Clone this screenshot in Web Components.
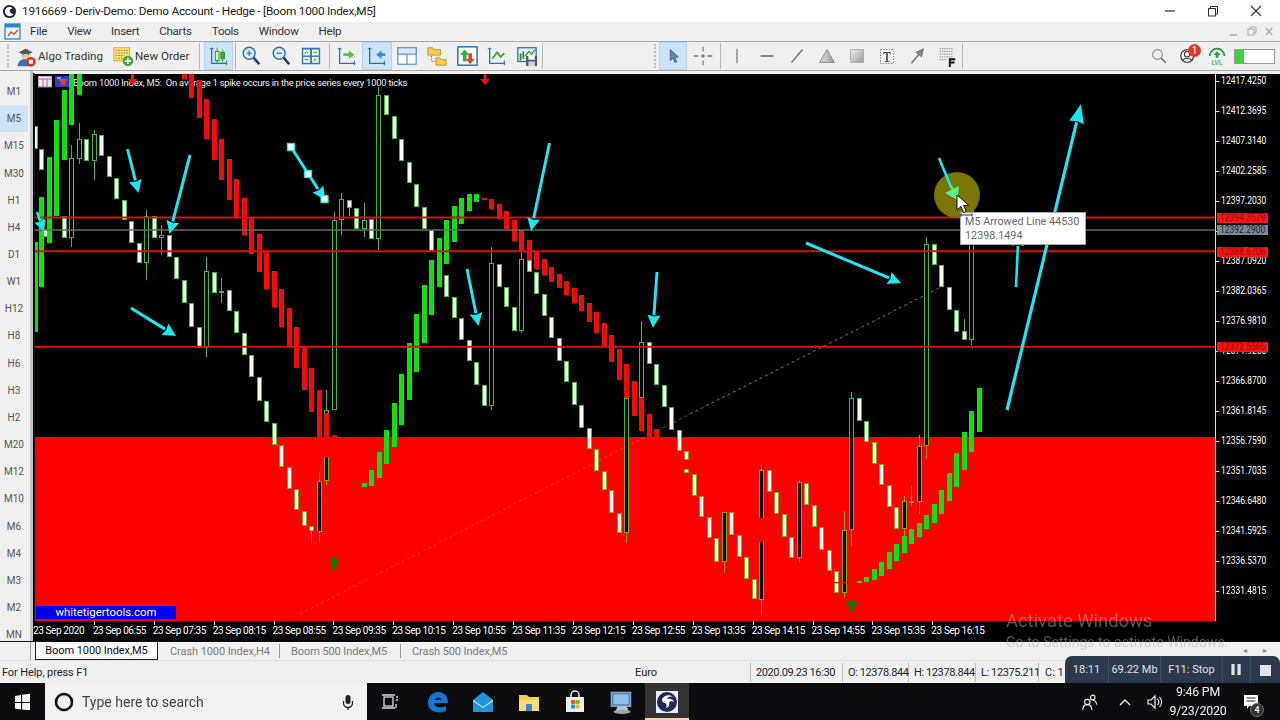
<!DOCTYPE html>
<html><head><meta charset="utf-8"><title>MT5</title>
<style>
html,body{margin:0;padding:0;width:1280px;height:720px;overflow:hidden;background:#f0f0f0;}
body{font-family:Roboto,"Liberation Sans",sans-serif;font-size:12px;color:#222;}
</style></head><body>
<mt-app>
  <win-title>1916669 - Deriv-Demo: Demo Account - Hedge - [Boom 1000 Index,M5]</win-title>
  <mt-menu></mt-menu>
  <mt-toolbar></mt-toolbar>
  <mt-main></mt-main>
  <mt-tabs></mt-tabs>
  <mt-status></mt-status>
  <mt-taskbar></mt-taskbar>
  <rec-widget></rec-widget>
  <win-watermark></win-watermark>
</mt-app>
<script>
const BL='#2a6fb0';
const axes=(c=BL)=>`<path d="M4 3v17h17" fill="none" stroke="${c}" stroke-width="1.4"/><path d="M2 4h4M20 17v5" stroke="${c}" stroke-width="1.1"/>`;
const svg=(b,s=24,vb=24)=>`<svg width="${s}" height="${s}" viewBox="0 0 ${vb} ${vb}" style="display:block">${b}</svg>`;
const ICONS={
 algo:`<path d="M3 7l8-4 8 4-8 4z" fill="#555"/><path d="M7 9v4h8V9" fill="#8a8a8a"/><circle cx="11" cy="13" r="4" fill="#f2c9a0"/><path d="M2 23c0-6 4-8 9-8s8 2 8 8z" fill="#2f74c0"/><circle cx="17" cy="18" r="5.5" fill="#e03020"/><rect x="14.7" y="15.7" width="4.6" height="4.6" fill="#fff"/>`,
 order:`<rect x="1" y="2" width="18" height="15" fill="#fbe27a" stroke="#c9a52a"/><path d="M3 5h14M3 8h14M3 11h10M3 14h8" stroke="#9a7f20" stroke-width="1" stroke-dasharray="2 1"/><circle cx="17" cy="17" r="6" fill="#3aa83a"/><path d="M17 13.5v7M13.5 17h7" stroke="#fff" stroke-width="2"/>`,
 candle:axes()+`<path d="M10 3v17M16 5v13" stroke="#2f8f2f"/><rect x="8" y="7" width="4" height="10" fill="#d8f0c8" stroke="#2f8f2f"/><rect x="14" y="8" width="4" height="7" fill="#3aa83a" stroke="#2f8f2f"/>`,
 zin:`<circle cx="10" cy="9" r="6.5" fill="#dcedfa" stroke="${BL}" stroke-width="1.5"/><path d="M7 9h6M10 6v6" stroke="${BL}" stroke-width="1.3"/><path d="M15 14l6 7" stroke="#1d3f75" stroke-width="2.8"/>`,
 zout:`<circle cx="10" cy="9" r="6.5" fill="#dcedfa" stroke="${BL}" stroke-width="1.5"/><path d="M7 9h6" stroke="${BL}" stroke-width="1.3"/><path d="M15 14l6 7" stroke="#1d3f75" stroke-width="2.8"/>`,
 tile:`<rect x="2" y="3" width="20" height="18" fill="#2f78ad"/><rect x="3.5" y="5" width="7.5" height="6.5" fill="#e6f3ea"/><rect x="13" y="5" width="7.5" height="6.5" fill="#e6f3ea"/><rect x="3.5" y="13" width="7.5" height="6.5" fill="#e6f3ea"/><rect x="13" y="13" width="7.5" height="6.5" fill="#e6f3ea"/><path d="M5 10l2-3 2 2M14.5 8h4M5 16h4M14.5 18l2-3 2 2" stroke="#2d9a3a" fill="none"/>`,
 shift:axes()+`<path d="M8 9h6V6l6 4.5-6 4.5v-3H8z" fill="#55c04a"/>`,
 scroll:axes()+`<path d="M21 9h-4V6l-6 4.5 6 4.5v-3h4z" fill="#2a8fe0"/>`,
 tpl:`<rect x="2" y="3" width="20" height="18" fill="#fff" stroke="#5a94c8" stroke-width="1.3"/><rect x="2" y="3" width="20" height="7" fill="#dbe8f3" stroke="#5a94c8" stroke-width="1.3"/><path d="M12 10v11" stroke="#5a94c8" stroke-width="1.3"/>`,
 folder:`<path d="M2 3h5l2 2h7v6H2z" fill="#f3cd52" stroke="#b8912a"/><path d="M11 14h4l2 2h5v6H11z" fill="#f3cd52" stroke="#b8912a"/><path d="M6 12v6h4" stroke="#666" fill="none" stroke-dasharray="1.5 1.5"/>`,
 updown:`<rect x="2" y="2" width="21" height="20" fill="#fff" stroke="${BL}" stroke-width="1.6"/><path d="M9.5 5l5 6h-3v7h-4v-7h-3z" fill="#3cae3c"/><path d="M15.5 21l5-6h-3v-6h-4v6h-3z" fill="#e0442c"/>`,
 lineC:axes()+`<path d="M7 15l5-7 4 5 4-4" fill="none" stroke="#3aa83a" stroke-width="2"/>`,
 save:`<rect x="2" y="3" width="20" height="15" fill="#eef5fb" stroke="${BL}" stroke-width="1.4"/><path d="M5 9v8M8 7v8" stroke="#2d8a3a" stroke-width="2"/><path d="M10 12l4-5 3 3 4-5" fill="none" stroke="#2d9a3a" stroke-width="1.5"/><rect x="11" y="12" width="12" height="11" fill="#4d5d6a"/><rect x="13.5" y="12" width="7" height="4" fill="#fff"/><rect x="13.5" y="18" width="7" height="5" fill="#cfd6db"/>`,
 cursor:`<path d="M9 5l0 12 3-2.600 2.200 4.800 2-.9-2.200-4.700 3.800-.4z" fill="#6584ad" stroke="#3a4c66" stroke-width=".8"/>`,
 cross:`<path d="M12 2v5M12 10v4M12 17v5M2 12h5M10 12h4M17 12h5" stroke="#777" stroke-width="1.4"/>`,
 vline:`<path d="M12 4v16" stroke="#8a8a8a" stroke-width="1.6"/>`,
 hline:`<path d="M5 12h14" stroke="#666" stroke-width="1.6"/>`,
 trend:`<path d="M6 19L18 5" stroke="#777" stroke-width="1.6"/>`,
 tri:`<defs><linearGradient id="t1" x1="0" x2="1"><stop offset="0" stop-color="#e4e4e4"/><stop offset="1" stop-color="#999"/></linearGradient></defs><path d="M12 5l8 14H4z" fill="url(#t1)" stroke="#888"/>`,
 rect:`<defs><linearGradient id="t2" x1="0" x2="1" y1="0" y2="1"><stop offset="0" stop-color="#f0f0f0"/><stop offset="1" stop-color="#999"/></linearGradient></defs><rect x="5" y="5" width="14" height="14" fill="url(#t2)" stroke="#aaa"/>`,
 textT:`<rect x="5" y="5" width="14" height="15" fill="#fff" stroke="#666" stroke-dasharray="1.5 1.5"/><path d="M8 7.500h8v2.500h-1l-.4-1.300H13V17.500h1.300v1h-4.600v-1H11V8.700H9.400L9 10H8z" fill="#555"/>`,
 arrowT:`<path d="M6 20L15 9" stroke="#777" stroke-width="1.800"/><path d="M19 4l-2 9-6-5z" fill="#888" stroke="#555" stroke-width=".7"/>`,
 fib:`<path d="M4 4h15M4 7h15M4 10h15M4 13h15M4 16h8" stroke="#999" stroke-width="1.200" stroke-dasharray="1.500 1"/><path d="M14 14.500h7v2h-4.800v1.600h4v2h-4V24H14z" fill="#111"/>`,
 search:`<circle cx="10" cy="10" r="6.5" fill="none" stroke="#888" stroke-width="1.4"/><path d="M15 15l6 6" stroke="#666" stroke-width="1.900"/>`
};
const def=(n,html)=>customElements.define(n,class extends HTMLElement{constructor(){super();this.attachShadow({mode:'open'}).innerHTML=typeof html==='function'?html():html;}});

def('mt-app',`<style>:host{display:flex;flex-direction:column;width:1280px;height:720px;position:relative;overflow:hidden;filter:blur(.3px)}</style><slot></slot>`);

def('win-title',`<style>:host{display:flex;align-items:center;height:22px;background:#fff;color:#222;font:11.8px Roboto,sans-serif;letter-spacing:-.25px;flex:none}
.ic{margin:0 5px 0 2px}span{flex:1;white-space:nowrap}.c{display:flex;align-items:center;justify-content:center;width:43px;height:22px}</style>
<div class="ic">${svg(`<circle cx="8" cy="8" r="7" fill="#1c2a44"/><path d="M8 3a5 5 0 1 0 4.5 7.500A4 4 0 0 1 8 6.500L11 4.500A5 5 0 0 0 8 3z" fill="#fff"/>`,15,16)}</div>
<span><slot></slot></span>
<div class="c">${svg(`<path d="M1 6h10" stroke="#333" stroke-width="1.200"/>`,12,12)}</div>
<div class="c">${svg(`<rect x="1.5" y="3.5" width="7" height="7.5" fill="none" stroke="#333"/><path d="M3.5 3.500V1.500h7v7.500H8.500" fill="none" stroke="#333"/>`,12,12)}</div>
<div class="c" style="margin-right:3px">${svg(`<path d="M1 1l10 10M11 1L1 11" stroke="#333" stroke-width="1.100"/>`,12,12)}</div>`);

def('mt-menu',`<style>:host{display:flex;align-items:center;height:18px;padding-bottom:1px;background:#f0f0f0;font:11.6px Roboto,sans-serif;letter-spacing:-.27px;color:#333;flex:none;padding-left:4px}
.m{display:flex;gap:20px;margin-left:9px;flex:1}.r{display:flex;gap:7px;margin-right:5px;color:#aaa}
</style>${svg(`<rect x="1" y="1" width="15" height="15" fill="#e8f2fb" stroke="#2a86d0" stroke-width="1.300"/><rect x="1" y="1" width="15" height="3.500" fill="#2a86d0"/><path d="M4 13l3-4 3 2 4-4" stroke="#d9532c" fill="none" stroke-width="1.400"/>`,17,17)}
<div class="m"><span>File</span><span>View</span><span>Insert</span><span>Charts</span><span>Tools</span><span>Window</span><span>Help</span></div>
<div class="r">${svg(`<path d="M2 9h7" stroke="#aaa" stroke-width="1.500"/>`,11,11)}${svg(`<rect x="2" y="3" width="6" height="6" fill="none" stroke="#aaa"/><path d="M4 3V1h6v6H8" fill="none" stroke="#aaa"/>`,11,11)}${svg(`<path d="M2 2l6 7M8 2L2 9" stroke="#aaa" stroke-width="1.300"/>`,11,11)}</div>`);

def('mt-toolbar',()=>{
 const b=(n,w=30,on=false)=>`<div class="b${on?' on':''}" style="width:${w}px">${svg(ICONS[n],22)}</div>`;
 const sep=()=>`<i class="s"></i>`;
 const sp=w=>`<span style="width:${w}px;flex:none"></span>`;
 return `<style>:host{display:flex;align-items:stretch;height:28px;flex:none;background:#f0f0f0;border-top:1px solid #a8a8a8;border-bottom:1px solid #a8a8a8;font:11.6px Roboto,sans-serif;color:#333;padding-left:7px}
.g{width:2px;margin:2px 3px 2px 0;border-left:2px dotted #bbb;box-sizing:border-box;flex:none}.s{width:1px;background:#b5b5b5;margin:1px 0;flex:none;display:block}
.b{display:flex;align-items:center;justify-content:center;flex:none;height:28px;box-sizing:border-box}.b.on{background:#cce4f7;border:1px solid #b0d4f0;}
.t{display:flex;align-items:center;gap:1px;flex:none;white-space:nowrap;box-sizing:border-box}.r{margin-left:auto;display:flex;align-items:center}
.badge{position:absolute;left:10px;top:-1px;width:13px;height:13px;border-radius:50%;background:#e03a25;color:#fff;font:10px/13px Roboto,sans-serif;text-align:center}
</style><i class="g"></i>
<div class="t" style="width:101px;padding-left:4px">${svg(ICONS.algo,21)}<span>Algo Trading</span></div>
<div class="t" style="width:86px">${svg(ICONS.order,21)}<span>New Order</span></div>
${sep()}${sp(4)}${b('candle',29,true)}${sp(2)}${sep()}
${b('zin')}${b('zout')}${b('tile')}${sp(3)}${sep()}${sp(2)}
${b('shift')}${b('scroll',30,true)}${b('tpl')}${b('folder')}${b('updown')}${b('lineC')}${b('save')}${sep()}
${sp(111)}<i class="g"></i>
${b('cursor',28,true)}${b('cross',31)}${sp(2)}${sep()}${sp(1)}
${b('vline')}${b('hline')}${b('trend')}${b('tri')}${b('rect')}${b('textT')}${b('arrowT')}${b('fib')}${sep()}
<div class="r"><div class="b" style="width:24px;margin-right:2px">${svg(ICONS.search,18)}</div>
<div style="position:relative;width:24px;margin-left:5px;height:22px">${svg(`<circle cx="10" cy="12" r="7" fill="#fff" stroke="#444" stroke-width="1.500"/><circle cx="10" cy="10" r="3" fill="none" stroke="#444" stroke-width="1.300"/><path d="M5 17c1-3 9-3 10 0" fill="none" stroke="#444" stroke-width="1.300"/>`,22)}<span class="badge">1</span></div>
<div style="width:22px;margin-left:5px">${svg(`<path d="M3 12a8 8 0 0 1 16 0" fill="none" stroke="#2a9c3a" stroke-width="2"/><path d="M11 7l4 4h-2.500v3h-3v-3H7z" fill="#2a9c3a"/><text x="11" y="22" text-anchor="middle" font-family="Roboto" font-size="7.500" fill="#2a9c3a">LVL</text>`,22)}</div>
<div style="width:39px;height:13px;margin:0 5px;border:1px solid #999;background:linear-gradient(90deg,#3fcf3f 0,#3fcf3f 22%,#fff 22%)"></div></div>`;
});

def('tf-panel',()=>`<style>:host{display:flex;flex-direction:column;width:30px;flex:none;background:#f0f0f0;padding-top:7px;box-sizing:border-box;font:10px Roboto,sans-serif;color:#555}
div{height:27.170px;display:flex;align-items:center;justify-content:center;flex:none;margin-right:2px}.on{background:#cce4f7}</style>
${'M1 M5 M15 M30 H1 H4 D1 W1 H12 H8 H6 H3 H2 M20 M12 M10 M6 M4 M3 M2 MN'.split(' ').map(t=>`<div class="${t==='M5'?'on':''}">${t}</div>`).join('')}`);

const W=[[35,126,149],[41.5,149,170],[45.5,229,237],[56.5,200,215],[64,216,238],[86.5,139,161],[101.5,135,156],[109,156,177],[116.5,178,199],[124,200,220],[131.5,221,243],[139,243,263],[154,216,238],[169,235,257],[176.5,257,279],[184,280,303],[191.5,303,327],[199,327,348],[214,272,293],[229,290,311],[236.5,311,333],[244,333,355],[251.5,355,377],[259,377,401],[266.5,401,422],[274,423,445],[281.5,445,467],[289,467,489],[296.5,489,510],[304,511,526],[311.5,526,531,526,543],[349,200,208,200,216],[356.5,208,229],[371.5,219,239],[386.5,95,115],[394,116,139],[401.5,139,161],[409,162,183],[416.5,184,207],[424,207,229],[431.5,230,251],[439,252,272],[446.5,275,297],[454,297,318],[461.5,318,340],[469,340,361],[476.5,362,385],[484,385,406],[499,264,287],[506.5,287,307],[514,307,331],[529,260,272],[536.5,272,294],[544,294,316],[551.5,317,338],[559,338,361],[566.5,361,382],[574,382,405],[581.5,405,428],[589,428,449],[596.5,449,471],[604,471,490],[611.5,490,513],[619,513,533],[649,342,364],[656.5,364,385],[664,385,407],[671.5,407,430],[679,430,451],[686,451,460],[686,469,473],[694,474,496],[701,496,517],[709,517,538],[716,538,562],[731,512,535],[739,535,557],[746.5,557,579],[754,579,599],[769,470,492],[776.5,492,514],[784,514,537],[791.5,537,558],[806.5,483,505],[814,505,527],[821.5,527,550],[829,550,571],[836,571,593],[859,398,421],[866.5,421,442],[874,442,464],[881,464,485],[889,485,507],[896.5,507,529],[934,244,265],[941.5,265,287],[949,287,310],[956,310,332],[964,331,340,319,340]];
const H=[[71.5,158,238,145,247],[79,139,159,123,164],[94,134,161,130,180],[146.5,216,263,210,280],[161.5,235,238,225,255],[206.5,271,348,257,357],[221.5,291,293,278,303],[319,481,532,472,543],[326.5,410,481,390,485],[334,220,410,212,410],[341.5,199,220,193,235],[364,220,229,203,237],[378.5,95,239,87,250],[491.5,263,406,247,410],[521.5,259,331,252,333],[626.5,398,533,398,543],[641.5,342,398,321,398],[724,512,562,512,573],[761.5,470,600,465,615],[799,482,558,480,563],[844,530,593,511,598],[851.5,398,530,392,547],[904,501,529,496,537],[911.5,501,503,486,507],[919,446,502,435,514],[926.5,244,446,237,459],[971.5,208,340,205,345]];
const G=[[35,242,332],[41.5,197,287],[49,157,243],[56.5,120,216],[64,90,160],[71.5,74,125],[79,74,95],[364,483,487],[371.5,470,486],[379,452,478],[386.5,430,464],[394,403,447],[401.5,374,425],[409,343,400],[416.5,314,372],[424,285,343],[431.5,260,315],[439,238,287],[446.5,220,264],[454,206,242],[461.5,198,224],[469,194,211],[476.5,194,202],[859,581,583],[866.5,577,582],[874,569,580],[881,562,576],[889,552,569],[896.5,544,561],[904,536,553],[911.5,529,544],[919,523,537],[926.5,515,529],[934,504,523],[941.5,490,514],[949,473,501],[956.5,453,487],[964,432,470],[971.5,411,452],[979,388,432]];
const R=[[184,74,79],[191.5,74,98],[199,80,118],[206.5,99,139],[214,119,160],[221.5,139,180],[229,159,200],[236.5,179,218],[244,198,235],[251.5,218,254],[259,234,272],[266.5,251,289],[274,271,307],[281.5,289,327],[289,308,347],[296.5,327,368],[304,347,390],[311.5,368,412],[319,390,437],[326.5,413,437],[334,435,437],[484,198,200],[491.5,199,209],[499,204,219],[506.5,211,229],[514,220,241],[521.5,230,251],[529,240,260],[536.5,252,269],[544,259,275],[551.5,267,282],[559,274,288],[566.5,281,295],[574,288,303],[581,295,311],[589,303,322],[596.5,312,333],[604,323,347],[611.5,335,362],[619,349,380],[626.5,364,398],[634,381,416],[641.5,398,431],[649,414,437],[656.5,429,437]];
function arrow(x1,y1,x2,y2,c='#1fe5ee',sw=3,hl=14,hw=7){const d=Math.hypot(x2-x1,y2-y1),ux=(x2-x1)/d,uy=(y2-y1)/d,bx=x2-ux*hl,by=y2-uy*hl,nx=-uy,ny=ux;
 return `<path d="M${x1} ${y1}L${bx} ${by}" stroke="${c}" stroke-width="${sw}"/><path d="M${x2} ${y2}L${bx+nx*hw} ${by+ny*hw}L${bx+ux*1.5} ${by+uy*1.5}L${bx-nx*hw} ${by-ny*hw}z" fill="${c}"/>`;}
function chartSvg(){
 const ST='url(#st)', fl=Math.floor;
 const wick=(x,a,b)=>`<rect x="${fl(x)}" y="${a}" width="1" height="${b-a}" fill="${ST}"/>`;
 const body=(x,t,b,f)=>`<rect x="${fl(x)-1.5}" y="${t+.5}" width="4" height="${Math.max(b-t-1,1)}" fill="${f}" stroke="${ST}" stroke-width="1"/>`;
 const bar=(x,t,b,f)=>`<rect x="${fl(x)-2}" y="${t}" width="5" height="${b-t}" fill="${f}"/>`;
 let s=`<defs><linearGradient id="st" gradientUnits="userSpaceOnUse" x1="0" x2="0" y1="74" y2="621"><stop offset="0" stop-color="#50b04a"/><stop offset=".6673" stop-color="#50b04a"/><stop offset=".6673" stop-color="#8fa012"/><stop offset="1" stop-color="#8fa012"/></linearGradient></defs>`;
 s+=`<rect x="35" y="437" width="1180" height="184" fill="#f00"/>`;
 s+=`<path d="M300 614L690 414" stroke="#f27a30" stroke-width="1" stroke-dasharray="3 3" opacity=".6"/><path d="M690 414L945 285" stroke="#a86464" stroke-width="1" stroke-dasharray="3 3"/>`;
 for(const c of H){if(c[3]<c[1])s+=wick(c[0],c[3],c[1]);if(c[4]>c[2])s+=wick(c[0],c[2],c[4]);s+=body(c[0],c[1],c[2],'#050505');}
 for(const c of W){if(c[3]!==undefined){if(c[3]<c[1])s+=wick(c[0],c[3],c[1]);if(c[4]>c[2])s+=wick(c[0],c[2],c[4]);}s+=body(c[0],c[1],c[2],'#f2ffec');}
 for(const c of G)s+=bar(c[0],c[1],c[2],'#10e010');
 for(const c of R)s+=bar(c[0],c[1],c[2],'#f50a0a');
 s+=`<rect x="323.5" y="437" width="7" height="20" fill="#f00"/><rect x="758" y="518" width="7" height="24" fill="#f00"/><rect x="330" y="437" width="8" height="4" fill="#f00"/>`;
 s+=`<path d="M833 582.500h16" stroke="#d01818" stroke-width="1.200"/>`;
 for(const y of [217.5,251.3,346.8])s+=`<path d="M35 ${y}H1215" stroke="#d81010" stroke-width="1.900"/>`;
 s+=`<path d="M35 230H1215" stroke="#6a6a6a" stroke-width="1.300"/>`;
 s+=`<circle cx="957" cy="195" r="23" fill="#7a7400"/>`;
 const a=(...p)=>arrow(...p), C='#1fe5ee';
 s+=a(127.5,149,138.5,193,C,3,13,6.5)+a(190,155,169.5,234,C,3,13,6.5)+a(37,212,44,232,C,2.6,12,6)+a(549.5,143,531,231,C,3,13,6.5)+a(131,308,176,336,C,3,13,6.5)+a(467,269,478.5,326,C,3,13,6.5)+a(657,272,653,328,C,3,13,6.5)+a(806,243,901,283,C,3,13,6.5);
 s+=`<path d="M939 158L951 187" stroke="${C}" stroke-width="2.600"/><path d="M945 193L959 186L957.500 200z" fill="#58ef90"/><path d="M951 186l4 9" stroke="#58ef90" stroke-width="2.600"/>`;
 s+=a(291,147,325,200,C,3,13,6.5)+a(1016,287,1018.5,232,C,2.6,14,6)+a(1007,410,1081,104,C,3.2,19,7.5);
 for(const[p,q]of[[291,147],[308,174],[324.5,199]])s+=`<rect x="${p-3.5}" y="${q-3.5}" width="7" height="7" fill="#fff" stroke="${C}" stroke-width="1.300"/>`;
 const rd=(x)=>`<path d="M${x-1.5} 74v5h-3.500l5 6 5-6h-3.500v-5z" fill="#f01010"/>`;
 s+=rd(132.5)+rd(485);
 const ug=(x,y)=>`<path d="M${x} ${y}l6 6h-3.500v7h-5v-7H${x-6}z" fill="#0c7a12"/>`;
 s+=ug(334,556)+ug(851.5,599);
 return `<svg width="1180" height="547" viewBox="35 74 1180 547" style="position:absolute;left:0;top:0;display:block">${s}</svg>`;
}
def('mt-chart',()=>{
 const ps='12417.4250 12412.3695 12407.3140 12402.2585 12397.2030 12392.1475 12387.0920 12382.0365 12376.9810 12371.9255 12366.8700 12361.8145 12356.7590 12351.7035 12346.6480 12341.5925 12336.5370 12331.4815'.split(' ');
 const ts='23 Sep 2020|23 Sep 06:55|23 Sep 07:35|23 Sep 08:15|23 Sep 08:55|23 Sep 09:35|23 Sep 10:15|23 Sep 10:55|23 Sep 11:35|23 Sep 12:15|23 Sep 12:55|23 Sep 13:35|23 Sep 14:15|23 Sep 14:55|23 Sep 15:35|23 Sep 16:15'.split('|');
 const tag=(t,y,bg,c)=>`<div class="tag" style="top:${y-74-5}px;background:${bg};color:${c}"><span>${t}</span></div>`;
 return `<style>:host{display:flex;flex-direction:column;flex:1;background:#000;color:#fff;border-left:3px solid #c4c4c4;padding-top:2px;box-sizing:border-box;min-width:0;padding-left:1px;font:9.8px Roboto,sans-serif;position:relative}
 :host::before{content:"";position:absolute;left:0;right:0;top:0;height:2px;background:#f0f0f0}
 .row{display:flex;height:548px;flex:none}
 .plot{flex:none;width:1180px;border-top:1px solid #eee;border-left:1px solid #111;position:relative;background:#000;overflow:hidden}
 .axis{flex:1;border-left:1px solid #ddd;border-top:1px solid #eee;padding-top:7px;position:relative;overflow:hidden;font-size:10px}
 .p{height:30px;line-height:0;padding-left:6px;white-space:nowrap;position:relative;transform:scaleX(.85);transform-origin:0 0;box-sizing:border-box}
 .p::before{content:"";position:absolute;left:0;top:0;width:4px;height:1px;background:#ddd}
 .tag{position:absolute;left:1px;width:51px;height:10px;line-height:10px;padding-left:3px;box-sizing:border-box;font-size:10px;white-space:nowrap}
 .tag span{display:inline-block;transform:scaleX(.85);transform-origin:0 0}
 .time{display:flex;height:19px;flex:none;margin-left:-1px;padding-top:4px;box-sizing:border-box}
 .t{width:59.9px;flex:none;white-space:nowrap;letter-spacing:-.4px;position:relative;line-height:12px;font-size:10px}
 .t:not(:first-child)::before{content:"";position:absolute;left:1px;top:-4px;width:1px;height:4px;background:#ddd}
 .hdr{position:absolute;left:38px;top:3px;white-space:pre;font-size:9.4px;letter-spacing:-.22px;color:#eee;line-height:12px}
 .ic{position:absolute;left:3px;top:2px;display:flex;gap:3px}
 .brand{position:absolute;left:1px;top:532px;width:140px;height:13px;background:#0000f0;color:#fff;font:11.4px/13px Roboto,sans-serif;text-align:center;box-sizing:border-box}
 .tip{position:absolute;left:925px;top:138px;width:126px;height:33px;box-sizing:border-box;background:#fff;border:1px solid #aaa;color:#666;font:10.8px/14px Roboto,sans-serif;padding:2px 4px}
 .cur{position:absolute;left:921px;top:120px}
 </style>
 <div class="row"><div class="plot">
  <div class="hdr">Boom 1000 Index, M5:  On average 1 spike occurs in the price series every 1000 ticks</div>
  ${chartSvg()}
  <div class="ic">${svg(`<rect x="0" y="0" width="14" height="11" fill="#e8e8f8" stroke="#88a"/><path d="M0 3h14M5 3v8M9 3v8" stroke="#d06060"/>`,14,14)}${svg(`<rect x="0" y="0" width="14" height="11" fill="#3040c0"/><path d="M4 3h8l-2 6H7z" fill="#e04040"/><path d="M2 2h4" stroke="#fff"/>`,14,14)}</div>
  <div class="brand">whitetigertools.com</div>
  <div class="tip">M5 Arrowed Line 44530<br>12398.1494</div>
  <div class="cur">${svg(`<path d="M5 19.500h11" stroke="#ffe870" stroke-width="1.200"/><path d="M5 21h11M5 19.500v3M16 19.500v3" stroke="#222" stroke-width="1"/><path d="M1 1v15l4-3.500 2.600 6 2.600-1.200-2.600-5.800h5.200z" fill="#fff" stroke="#111" stroke-width="1"/>`,24)}</div>
 </div>
 <div class="axis">${ps.map(p=>`<div class="p">${p}</div>`).join('')}
  ${tag('12394.3579',218,'#f01818','#a80000')}${tag('12392.2900',230,'#7a8898','#222')}${tag('12388.6706',251.5,'#f01818','#a80000')}${tag('12372.5565',347,'#f01818','#a80000')}
 </div></div>
 <div class="time">${ts.map(t=>`<div class="t">${t}</div>`).join('')}</div>`;
});
def('mt-main',`<style>:host{display:flex;height:570px;flex:none;overflow:hidden}</style><tf-panel></tf-panel><mt-chart></mt-chart>`);

def('mt-tabs',`<style>:host{display:flex;align-items:center;height:20px;flex:none;background:#f0f0f0;font:11px Roboto,sans-serif;letter-spacing:-.08px;color:#7a7a7a;border-top:1px solid #111;border-bottom:1px solid #e0e0e0;box-sizing:border-box;padding:0 0 0 30px;position:relative}
.g{width:2px;align-self:stretch;border-left:1px solid #a0a0a0;border-right:1px solid #fff;margin-right:1px}
.a{width:123px;height:18px;margin-right:12px;background:#fff;border:1px solid #222;border-top:0;color:#111;box-sizing:border-box;text-align:center;line-height:17px;flex:none}
.x{flex:none;white-space:nowrap}.s{width:1px;height:14px;background:#999;flex:none}
.n{position:absolute;top:4px;color:#888;font-size:8px}</style><i class="g"></i>
<div class="a">Boom 1000 Index,M5</div><div class="x" style="width:109px">Crash 1000 Index,H4</div><i class="s"></i><div class="x" style="margin-left:11px;width:109px">Boom 500 Index,M5</div><i class="s"></i><div class="x" style="margin-left:11px">Crash 500 Index,M5</div>
<span class="n" style="left:1243px">◂</span><span class="n" style="left:1263px">▸</span>`);

def('mt-status',`<style>:host{display:flex;align-items:center;height:22px;flex:none;background:#f0f0f0;font:11px Roboto,sans-serif;color:#222;white-space:nowrap;box-sizing:border-box;padding-top:1px}
div{flex:none;border-right:1px solid #bdbdbd;height:19px;line-height:19px;box-sizing:border-box}.n{letter-spacing:-.4px}</style>
<div style="width:633px;padding-left:2px;border:0;letter-spacing:-.1px">For Help, press F1</div>
<div style="width:118px;padding-left:2px">Euro</div>
<div class="n" style="width:92px;padding-left:5px">2020.09.23 16:30</div>
<div class="n" style="width:66px;padding-left:5px">O: 12378.844</div>
<div class="n" style="width:67px;padding-left:5px">H: 12378.844</div>
<div class="n" style="width:63px;padding-left:5px">L: 12375.211</div>
<div style="border:0;padding-left:6px">C: 1</div>`);

def('mt-taskbar',`<style>:host{display:flex;align-items:center;height:37px;flex:none;background:#0c0c0e;color:#f0f0f0;font:12px Roboto,sans-serif}
.w{width:45px;display:flex;justify-content:center;flex:none}
.s{width:322px;height:37px;background:#f2f2f2;color:#444;display:flex;align-items:center;font:14px Roboto,sans-serif;flex:none;box-sizing:border-box;padding-left:9px;gap:8px}
.s span{flex:1}.i{display:flex;align-items:center;justify-content:center;height:37px;width:46px;flex:none}.on{background:#333;height:37px;width:44px;margin-left:1px;position:relative}
.on::after{content:"";position:absolute;left:0;right:0;bottom:0;height:2px;background:#f2d2b8}
.r{margin-left:auto;display:flex;align-items:center}.c{text-align:center;width:64px;line-height:18.5px;font-size:12.4px;white-space:nowrap;letter-spacing:-.2px}</style>
<div class="w">${svg(`<path d="M1 3l6-1v7H1zM8.200 1.800L16 .8V9H8.200zM1 10h6v6.500l-6-1zM8.200 10H16v7.500l-7.800-1z" fill="#fff"/>`,17,17)}</div>
<div class="s">${svg(`<circle cx="10" cy="10" r="8" fill="none" stroke="#111" stroke-width="2.600"/>`,20,20)}<span>Type here to search</span><div style="width:38px;display:flex;justify-content:center">${svg(`<rect x="5.5" y="1" width="5" height="9" rx="2.500" fill="#222"/><path d="M3.500 7v2a4.500 4.500 0 0 0 9 0V7M8 14v2" fill="none" stroke="#222" stroke-width="1.300"/>`,16,16)}</div></div>
<div class="i" style="margin-right:3px">${svg(`<rect x="3" y="4" width="9" height="9" fill="none" stroke="#ddd" stroke-width="1.300"/><path d="M1 2h13M1 15h13M15 4h2M15 7h2M15 11v4" stroke="#ddd" stroke-width="1.300"/>`,18,18)}</div>
<div class="i" style="width:44px">${svg(`<path d="M2 13C2 6 7 2 12 2c6 0 10 4 10 11H8c0 4 6 6 12 3v5c-7 3-18 1-18-8zm6.500-3h7C15 6.500 9.500 6.500 8.500 10z" fill="#0f78d4"/>`,24)}</div>
<div class="i">${svg(`<path d="M2 10l10-8 10 8v12H2z" fill="#1e96d8"/><path d="M2 10l10 7 10-7v1l-10 7-10-7z" fill="#fff"/>`,24)}</div>
<div class="i">${svg(`<path d="M2 5h8l2 2h10v14H2z" fill="#f3cd52"/><rect x="2" y="10" width="20" height="11" fill="#f8dc78"/><rect x="9" y="14" width="6" height="7" fill="#3a8ad0"/>`,24)}</div>
<div class="i">${svg(`<rect x="3" y="7" width="18" height="15" fill="#eee"/><path d="M8 7V5a4 4 0 0 1 8 0v2" fill="none" stroke="#eee" stroke-width="1.500"/><rect x="8" y="10" width="4" height="4" fill="#f25022"/><rect x="12.5" y="10" width="4" height="4" fill="#7fba00"/><rect x="8" y="14.5" width="4" height="4" fill="#00a4ef"/><rect x="12.5" y="14.5" width="4" height="4" fill="#ffb900"/>`,24)}</div>
<div class="i">${svg(`<rect x="3" y="3" width="18" height="13" fill="#4a8ac8" stroke="#aac"/><rect x="5" y="5" width="14" height="9" fill="#8fc0e8"/><path d="M9 16l-2 4h12l-2-4z" fill="#b8c4d0"/><ellipse cx="13" cy="21" rx="8" ry="2" fill="#9aa"/>`,26)}</div>
<div class="i on">${svg(`<rect x="1" y="1" width="22" height="22" fill="#eef"/><circle cx="12" cy="12" r="10" fill="#1c2a5a"/><path d="M7 9c2-4 8-5 11-2-3-1-5 0-6 2 3-1 6 0 7 3-2-1-4-1-5 0 1 2 0 5-3 6 1-2 1-4-1-5-2 0-3-2-3-4z" fill="#fff"/>`,24)}</div>
<div class="r"><div class="i" style="width:37px">${svg(`<circle cx="7" cy="10" r="3" fill="none" stroke="#eee" stroke-width="1.300"/><path d="M2 19c0-4 2-6 5-6s5 2 5 6" fill="none" stroke="#eee" stroke-width="1.300"/><circle cx="13" cy="5" r="2.600" fill="none" stroke="#eee" stroke-width="1.200"/><path d="M13 8c3 0 4 2 4.500 5" fill="none" stroke="#eee" stroke-width="1.200"/>`,18,20)}</div>
<div class="i" style="width:34px">${svg(`<path d="M2 10l5-5 5 5" fill="none" stroke="#eee" stroke-width="1.300"/>`,14,14)}</div>
<div class="i" style="width:24px">${svg(`<path d="M3 7h3l4-4v12l-4-4H3z" fill="none" stroke="#eee" stroke-width="1.200"/><path d="M12.500 6a4 4 0 0 1 0 6M14.500 4a7 7 0 0 1 0 10" fill="none" stroke="#eee" stroke-width="1.100"/>`,18,18)}</div>
<div class="c">9:46 PM<br>9/23/2020</div>
<div class="i" style="width:42px;position:relative;margin-right:8px">${svg(`<path d="M2 2h14v11H7l-2 3v-3H2z" fill="#fff"/><path d="M4.500 5h9M4.500 8h9" stroke="#222"/>`,18,18)}<span style="position:absolute;right:8px;bottom:3px;width:14px;height:14px;border-radius:50%;background:#333;border:1px solid #777;box-sizing:border-box;font:bold 9px/12px Roboto;text-align:center;color:#eee">4</span></div></div>`);

def('rec-widget',`<style>:host{position:absolute;left:1065px;top:656px;width:215px;height:27px;background:#2c394d;border-radius:7px 7px 0 0;display:flex;align-items:center;color:#dfe4ea;font:11px Roboto,sans-serif;box-sizing:border-box}
div{height:27px;box-sizing:border-box;border-right:1px solid #3e4b60;flex:none;display:flex;align-items:center;justify-content:center;white-space:nowrap}</style>
<div style="width:44px">18:11</div><div style="width:52px">69.22 Mb</div><div style="width:62px">F11: Stop</div>
<div style="width:28px">${svg(`<path d="M1.5 1h3.500v12H1.500zM8 1h3.500v12H8z" fill="#dfe4ea"/>`,13,14)}</div><div style="width:29px;border:0">${svg(`<rect x="0" y="1" width="11" height="11" fill="#dfe4ea"/>`,12,12)}</div>`);

def('win-watermark',`<style>:host{position:absolute;left:1006px;top:610px;color:rgba(175,175,175,.5);font:18.400px/22px Roboto,sans-serif;white-space:nowrap;pointer-events:none}
small{display:block;font-size:14.100px;line-height:21px}</style>Activate Windows<small>Go to Settings to activate Windows.</small>`);
</script></body></html>
